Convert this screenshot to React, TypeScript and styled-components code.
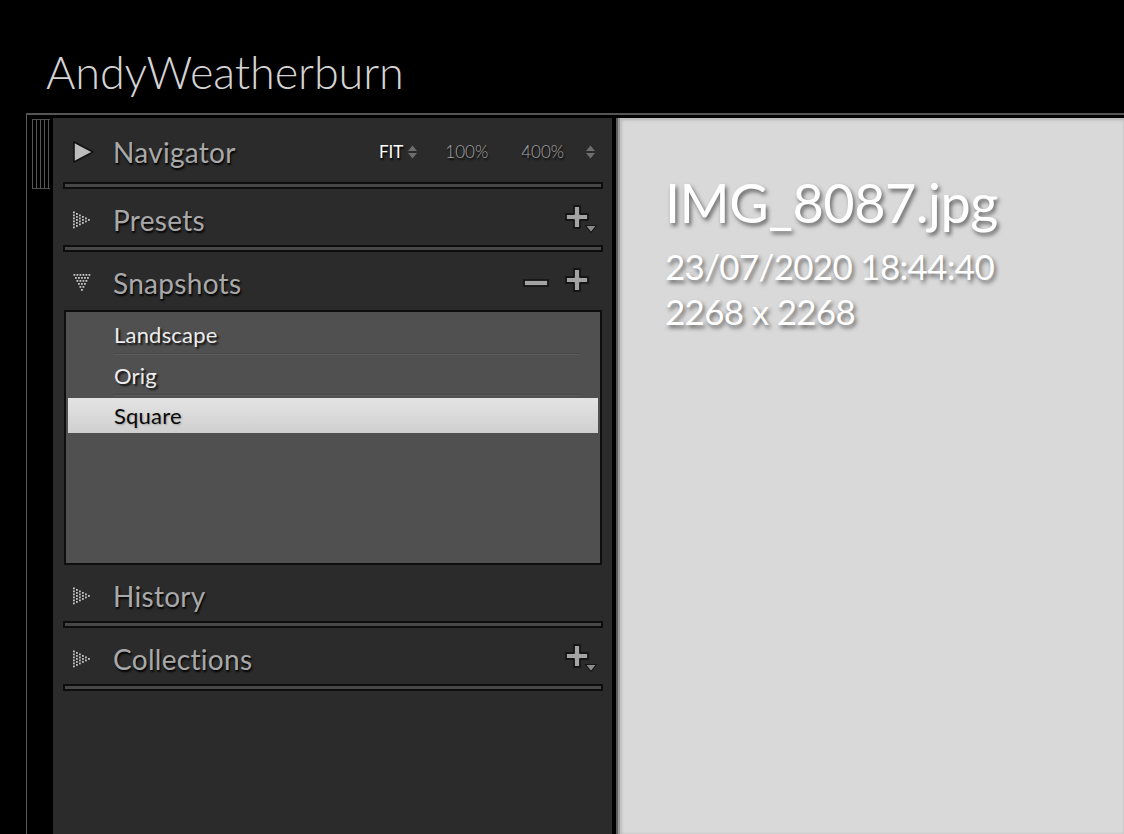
import React from "react";
import styled, { createGlobalStyle } from "styled-components";

const GlobalStyle = createGlobalStyle`
  html, body {
    margin: 0;
    padding: 0;
    background: #000000;
  }
  * {
    box-sizing: border-box;
  }
`;

const Page = styled.div`
  width: 1124px;
  height: 834px;
  overflow: hidden;
  background: #000000;
  display: flex;
  flex-direction: column;
  font-family: Lato, "Liberation Sans", sans-serif;
`;

const TitleBar = styled.div`
  height: 113px;
  flex: none;
  display: flex;
  align-items: flex-end;
  padding: 0 0 18px 46px;
  > h1 {
    margin: 0;
    font-family: Lato, "Liberation Sans", sans-serif;
    font-weight: 300;
    font-size: 45px;
    line-height: 45px;
    letter-spacing: -0.1px;
    color: #d4d4d4;
  }
`;

const Frame = styled.div`
  flex: 1;
  margin-left: 26px;
  border-top: 2px solid #555555;
  border-left: 1px solid #5a5a5a;
  padding-top: 3px;
  display: flex;
  min-height: 0;
`;

const GripColumn = styled.div`
  width: 26px;
  flex: none;
  padding: 1px 0 0 5px;
`;

const Grip = styled.div`
  width: 18px;
  height: 70px;
  border-top: 1px solid #505050;
  border-bottom: 1px solid #505050;
  background: repeating-linear-gradient(
    to right,
    #555555 0px,
    #555555 1px,
    transparent 1px,
    transparent 4px
  );
`;

const SidePanel = styled.div`
  width: 559px;
  flex: none;
  background: #2b2b2b;
  display: flex;
  flex-direction: column;
`;

const Header = styled.div<{ tall?: boolean }>`
  height: ${(p) => (p.tall ? "64px" : "56px")};
  padding: ${(p) => (p.tall ? "3px" : "5px")} 14px 0 19px;
  display: flex;
  align-items: center;
  flex: none;
`;

const ToggleIcon = styled.div`
  width: 41px;
  height: 24px;
  display: flex;
  align-items: center;
`;

const Title = styled.h2`
  margin: 0;
  font-family: Lato, "Liberation Sans", sans-serif;
  font-weight: 400;
  font-size: 28px;
  letter-spacing: 0.3px;
  color: #a9a9a9;
  text-shadow: 1px 2px 2px #000000;
`;

const Actions = styled.div`
  margin-left: auto;
  display: flex;
  align-items: center;
  gap: 14px;
`;

const ZoomOption = styled.span<{ active?: boolean }>`
  font-family: Lato, "Liberation Sans", sans-serif;
  font-size: 17px;
  font-weight: ${(p) => (p.active ? 400 : 300)};
  color: ${(p) => (p.active ? "#ffffff" : "#a3a3a3")};
  text-shadow: 1px 2px 2px #000000;
  display: flex;
  align-items: center;
  gap: 4px;
`;

const NavActions = styled(Actions)`
  gap: 0;
  margin-right: 2px;
  > span:nth-child(2) {
    margin-left: 27px;
  }
  > span:nth-child(3) {
    margin-left: 33px;
  }
  > svg {
    margin-left: 21px;
  }
`;

const Bar = styled.div`
  height: 7px;
  margin: 0 9px 0 10px;
  border: 2px solid #0d0d0d;
  background: #474747;
  flex: none;
`;

const ListBox = styled.div`
  height: 255px;
  margin: 2px 10px 0 11px;
  border: 2px solid #0e0e0e;
  background: #505050;
  padding: 2px 2px 0;
  flex: none;
`;

const SnapshotRow = styled.div<{ selected?: boolean }>`
  position: relative;
  height: ${(p) => (p.selected ? "35px" : "41px")};
  margin-top: ${(p) => (p.selected ? "2px" : "0")};
  padding-left: 46px;
  display: flex;
  align-items: center;
  font-family: Lato, "Liberation Sans", sans-serif;
  font-size: 22px;
  letter-spacing: 0.2px;
  color: ${(p) => (p.selected ? "#0a0a0a" : "#ececec")};
  text-shadow: ${(p) =>
    p.selected ? "1px 1px 2px rgba(0,0,0,0.25)" : "2px 2px 2px #111111"};
  background: ${(p) =>
    p.selected ? "linear-gradient(#e4e4e4, #cfcfcf)" : "transparent"};
  ${(p) =>
    !p.selected &&
    `
    &:after {
      content: "";
      position: absolute;
      left: 46px;
      right: 18px;
      bottom: 0;
      height: 1px;
      background: #5c5c5c;
      box-shadow: 0 -1px 0 #474747;
    }
  `}
`;

const Divider = styled.div`
  width: 4px;
  flex: none;
  background: #000000;
`;

const Content = styled.div`
  flex: 1;
  background: #d9d9d9;
  border-left: 2px solid #5c5c5c;
  box-shadow: inset 2px 0 0 #999999, inset 4px 0 3px #bdbdbd,
    inset 0 2px 3px #b5b5b5;
  padding: 55px 0 0 47px;
  color: #ffffff;
  font-family: Lato, "Liberation Sans", sans-serif;
  text-shadow: 2px 3px 4px rgba(0, 0, 0, 0.55);
`;

const FileName = styled.div`
  font-size: 54px;
  line-height: 60px;
  letter-spacing: -0.5px;
  margin-bottom: 11px;
`;

const Meta = styled.div`
  font-size: 35px;
  line-height: 45px;
  letter-spacing: -0.7px;
`;

const PlayIcon = () => (
  <svg width="24" height="24" viewBox="0 0 24 24">
    <path d="M2 2 L21 12 L2 22 Z" fill="#bdbdbd" stroke="#111" strokeWidth="1.5" strokeLinejoin="round" />
  </svg>
);

const DotTriangle: React.FC<{ down?: boolean }> = ({ down }) => {
  const dots: React.ReactNode[] = [];
  const n = 6;
  for (let i = 0; i < n; i++) {
    const count = n - i;
    for (let j = 0; j < count; j++) {
      const along = i * 3;
      const across = (j - (count - 1) / 2) * 3 + 8;
      const x = down ? across : along;
      const y = down ? along : across;
      dots.push(
        <rect key={`${i}-${j}`} x={x + 1} y={y + 1} width="1.8" height="1.8" fill="#c4c4c4" />
      );
    }
  }
  return (
    <svg width="20" height="20" viewBox="0 0 20 20">
      {dots}
    </svg>
  );
};

const UpDown = () => (
  <svg width="11" height="16" viewBox="0 0 11 16">
    <path d="M1 7 L5.5 1.5 L10 7 Z" fill="#6e6e6e" />
    <path d="M1 9 L5.5 14.5 L10 9 Z" fill="#6e6e6e" />
  </svg>
);

const PlusIcon: React.FC<{ menu?: boolean }> = ({ menu }) => (
  <svg width="34" height="32" viewBox="0 0 34 32">
    <path
      d="M10 2 H16 V10 H24 V16 H16 V24 H10 V16 H2 V10 H10 Z"
      fill="#a3a3a3"
      stroke="#151515"
      strokeWidth="1.8"
      strokeLinejoin="round"
    />
    {menu && <path d="M21.5 21.5 L32.5 21.5 L27 28.5 Z" fill="#8c8c8c" stroke="#151515" strokeWidth="1.2" strokeLinejoin="round" />}
  </svg>
);

const MinusIcon = () => (
  <svg width="28" height="14" viewBox="0 0 28 14">
    <rect x="2" y="4" width="24" height="6" fill="#a3a3a3" stroke="#151515" strokeWidth="1.8" />
  </svg>
);

const snapshots = ["Landscape", "Orig", "Square"];

export default function App() {
  return (
    <Page>
      <GlobalStyle />
      <TitleBar>
        <h1>AndyWeatherburn</h1>
      </TitleBar>
      <Frame>
        <GripColumn>
          <Grip />
        </GripColumn>
        <SidePanel>
          <Header tall>
            <ToggleIcon>
              <PlayIcon />
            </ToggleIcon>
            <Title>Navigator</Title>
            <NavActions>
              <ZoomOption active>
                FIT <UpDown />
              </ZoomOption>
              <ZoomOption>100%</ZoomOption>
              <ZoomOption>400%</ZoomOption>
              <UpDown />
            </NavActions>
          </Header>
          <Bar />
          <Header>
            <ToggleIcon>
              <DotTriangle />
            </ToggleIcon>
            <Title>Presets</Title>
            <Actions>
              <PlusIcon menu />
            </Actions>
          </Header>
          <Bar />
          <Header>
            <ToggleIcon>
              <DotTriangle down />
            </ToggleIcon>
            <Title>Snapshots</Title>
            <Actions>
              <MinusIcon />
              <PlusIcon />
            </Actions>
          </Header>
          <ListBox>
            {snapshots.map((name) => (
              <SnapshotRow key={name} selected={name === "Square"}>
                {name}
              </SnapshotRow>
            ))}
          </ListBox>
          <Header>
            <ToggleIcon>
              <DotTriangle />
            </ToggleIcon>
            <Title>History</Title>
          </Header>
          <Bar />
          <Header>
            <ToggleIcon>
              <DotTriangle />
            </ToggleIcon>
            <Title>Collections</Title>
            <Actions>
              <PlusIcon menu />
            </Actions>
          </Header>
          <Bar />
        </SidePanel>
        <Divider />
        <Content>
          <FileName>IMG_8087.jpg</FileName>
          <Meta>23/07/2020 18:44:40</Meta>
          <Meta>2268 x 2268</Meta>
        </Content>
      </Frame>
    </Page>
  );
}
